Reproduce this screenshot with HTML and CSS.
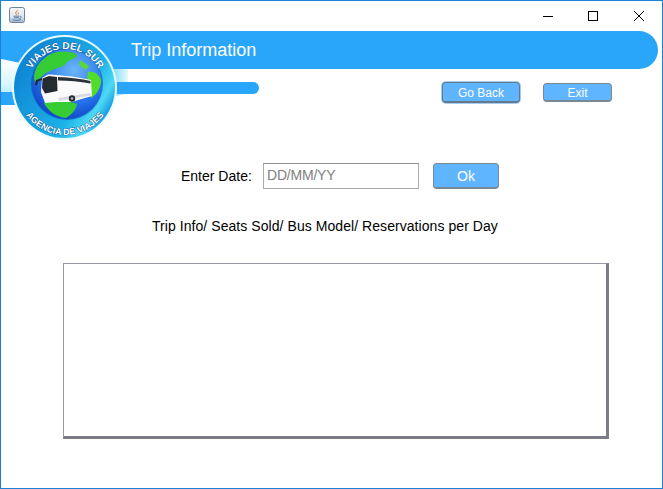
FILE: index.html
```html
<!DOCTYPE html>
<html lang="en">
<head>
  <meta charset="UTF-8">
  <title>Trip Information</title>
  <link rel="stylesheet" href="styles.css">
</head>
<body>

  <div class="window">
    <!-- Title bar -->
    <div class="titlebar">
      <svg class="app-icon" width="16" height="16" viewBox="0 0 16 16">
        <defs>
          <linearGradient id="iconBg" x1="0" y1="0" x2="0" y2="1">
            <stop offset="0" stop-color="#f4f6f8"/>
            <stop offset="0.6" stop-color="#dfe6ee"/>
            <stop offset="1" stop-color="#9fb4cc"/>
          </linearGradient>
        </defs>
        <rect x="0.5" y="0.5" width="15" height="15" rx="2" fill="url(#iconBg)" stroke="#6f8299"/>
        <path d="M8.5 2.5C9.5 4 6.5 5 7.2 6.6C7.5 7.4 8 7.8 8 8.4C6.8 7.6 5.8 6.4 6.6 5.1C7.2 4.2 8.4 3.6 8.5 2.5Z" fill="#e2601c"/>
        <path d="M10 4.6C9 5.3 8.4 5.8 8.8 6.8C9 7.3 9 7.8 8.8 8.2C9.8 7.4 9.6 6.6 9.3 6.1C9.1 5.6 9.4 5.1 10 4.6Z" fill="#e2601c"/>
        <path d="M4.5 9.2H10.5M5 10.7H10M3.5 12.6C6 13.5 10 13.5 12 12.4M11 9.2C12.6 9.2 12.6 11 10.4 11.4" stroke="#4d7397" stroke-width="0.9" fill="none"/>
      </svg>
      <div class="window-controls">
        <svg width="12" height="12" viewBox="0 0 12 12"><path d="M2 6.5H12" stroke="#000"/></svg>
        <svg width="12" height="12" viewBox="0 0 12 12"><rect x="1.5" y="1.5" width="9" height="9" fill="none" stroke="#000"/></svg>
        <svg width="12" height="12" viewBox="0 0 12 12"><path d="M1 1L11 11M11 1L1 11" stroke="#000" fill="none"/></svg>
      </div>
    </div>

    <div class="content">
      <div class="banner">
        <h1 class="banner-title">Trip Information</h1>
      </div>

      <div class="nav-row">
        <div class="sub-bar"></div>
        <div class="nav-buttons">
          <button class="button button-focus">Go Back</button>
          <button class="button button-exit">Exit</button>
        </div>
      </div>

      <div class="date-row">
        <label class="date-label" for="dateInput">Enter Date:</label>
        <input class="date-input" id="dateInput" type="text" placeholder="DD/MM/YY">
        <button class="button button-ok">Ok</button>
      </div>

      <p class="caption">Trip Info/ Seats Sold/ Bus Model/ Reservations per Day</p>

      <textarea class="results"></textarea>

      <!-- Logo sits over the banner, viewBox uses window coordinates -->
      <svg class="logo" width="130" height="115" viewBox="1 31 130 115">
        <defs>
          <linearGradient id="swoosh" x1="0" y1="0" x2="1" y2="0">
            <stop offset="0" stop-color="#6fd8f6"/>
            <stop offset="1" stop-color="#e4f9ff"/>
          </linearGradient>
          <linearGradient id="swooshLeft" x1="0" y1="0" x2="0" y2="1">
            <stop offset="0" stop-color="#ffffff"/>
            <stop offset="0.55" stop-color="#d8f6fe"/>
            <stop offset="1" stop-color="#8fe0f8"/>
          </linearGradient>
          <linearGradient id="ring" x1="0" y1="0" x2="1" y2="0.6">
            <stop offset="0" stop-color="#0b78d4"/>
            <stop offset="0.3" stop-color="#1290d8"/>
            <stop offset="0.75" stop-color="#1cb2e8"/>
            <stop offset="0.92" stop-color="#4ed9f4"/>
            <stop offset="1" stop-color="#1ea6e4"/>
          </linearGradient>
          <radialGradient id="globe" cx="0.6" cy="0.3" r="0.8">
            <stop offset="0" stop-color="#6cb6f8"/>
            <stop offset="0.6" stop-color="#2470ea"/>
            <stop offset="1" stop-color="#0c38bc"/>
          </radialGradient>
          <path id="arcTop" d="M27 87A38 38 0 0 1 103 87"/>
          <path id="arcBottom" d="M17 87A48 48 0 0 0 113 87"/>
        </defs>

        <path d="M1 59C6 60 12 61 20 63V105L1 105Z" fill="url(#swooshLeft)"/>
        <path d="M1 92H20V105H1Z" fill="#29a6fa"/>
        <path d="M110 69H128V94L110 97Z" fill="url(#swoosh)"/>
        <path d="M110 82H128V94H110Z" fill="#29a6fa"/>

        <circle cx="64.5" cy="87.5" r="52.5" fill="#e8fbff"/>
        <circle cx="64.5" cy="87.5" r="50.5" fill="url(#ring)"/>
        <circle cx="67" cy="84" r="36" fill="#0b3fc0" opacity="0.6"/>
        <circle cx="67" cy="84" r="35" fill="url(#globe)"/>

        <!-- continents -->
        <path d="M46 57C54 51 66 50 76 54C78 57 74 59 70 60C66 62 66 66 60 67C54 69 50 71 46 73L35 82C32 74 37 63 46 57Z" fill="#35cc34"/>
        <path d="M88 72C94 71 99 74 101 80C101 88 97 94 91 98C89 90 86 80 88 72Z" fill="#52dc2c"/>
        <path d="M44 103C56 101 70 101 77 104C76 110 72 114 66 118C56 117 48 111 44 103Z" fill="#35cc34"/>
        <path d="M80 60L89 66L86 70L79 65Z" fill="#5ad83a"/>

        <!-- bus -->
        <path d="M42 78L48 74.5C62 75 78 77 91 80L92 96L78 100L72 102H56L45 103L41 92Z" fill="#fafafa"/>
        <path d="M42.5 78.5L49 76L57 77L57.5 91L45 93.5L42 88Z" fill="#242b33"/>
        <path d="M58 77C70 77.5 82 79 90.5 81L90.5 83.5C80 81.5 68 80.5 58 80.5Z" fill="#2a3139"/>
        <path d="M42 78L36 80L35 85L37 85.5L38 81.5L42 80Z" fill="#242b33"/>
        <path d="M58 98L90 93L91 95.5L59 101Z" fill="#d8dce0"/>
        <circle cx="72" cy="98.5" r="3.2" fill="#242b33"/>
        <circle cx="72" cy="98.5" r="1.3" fill="#b0b8c0"/>

        <text class="logo-top"><textPath href="#arcTop" startOffset="50%" text-anchor="middle">VIAJES DEL SUR</textPath></text>
        <text class="logo-bottom"><textPath href="#arcBottom" startOffset="50%" text-anchor="middle">AGENCIA DE VIAJES</textPath></text>
      </svg>
    </div>
  </div>

</body>
</html>
```

FILE: styles.css
```css
body, html {
  margin: 0;
  padding: 0;
  height: 100%;
  font-family: "Liberation Sans", Arial, sans-serif;
  background: #fff;
}

.window {
  box-sizing: border-box;
  width: 663px;
  height: 489px;
  border: 1px solid #1a82d8;
  display: flex;
  flex-direction: column;
  background: #fff;
}

.titlebar {
  height: 30px;
  flex: none;
  display: flex;
  align-items: center;
  justify-content: space-between;
  padding-left: 8px;
}

.app-icon {
  display: block;
  margin-top: -2px;
}

.window-controls {
  display: flex;
  gap: 34px;
  padding-right: 17px;
  margin-top: -1px;
}

.window-controls svg {
  display: block;
}

.content {
  position: relative;
  flex-grow: 1;
  display: flex;
  flex-direction: column;
}

.banner {
  box-sizing: border-box;
  height: 38px;
  margin-right: 4px;
  background: #29a6fa;
  border-radius: 0 19px 19px 0;
  display: flex;
  align-items: center;
  padding: 1px 0 0 130px;
}

.banner-title {
  margin: 0;
  font-size: 18px;
  font-weight: normal;
  color: #fff;
}

.nav-row {
  display: flex;
  justify-content: space-between;
  align-items: flex-start;
  margin-top: 13px;
  padding-right: 50px;
}

.sub-bar {
  width: 142px;
  height: 12px;
  margin-left: 116px;
  background: #29a6fa;
  border-radius: 0 6px 6px 0;
}

.nav-buttons {
  display: flex;
  align-items: center;
  gap: 23px;
}

.button {
  box-sizing: border-box;
  padding: 1px 0 0;
  background: #5fb5ff;
  border: 1px solid #7a8794;
  border-bottom-width: 2px;
  border-radius: 4px;
  color: #fff;
  font-family: inherit;
  font-size: 12px;
}

.button-focus {
  width: 78px;
  height: 21px;
  border-color: #66788c;
  box-shadow: 0 0 0 1px #a4cdf0;
}

.button-exit {
  width: 69px;
  height: 19px;
}

.date-row {
  display: flex;
  align-items: center;
  margin-top: 60px;
  padding-left: 180px;
}

.date-label {
  width: 82px;
  font-size: 14px;
  color: #000;
}

.date-input {
  box-sizing: border-box;
  width: 156px;
  height: 26px;
  padding: 0 3px 3px;
  margin: 0;
  border: 1px solid #ababab;
  border-top-color: #8f8f8f;
  border-radius: 0;
  outline: none;
  font-family: inherit;
  font-size: 14px;
  letter-spacing: -0.2px;
}

.date-input::placeholder {
  color: #808080;
  opacity: 1;
}

.button-ok {
  width: 66px;
  height: 26px;
  margin-left: 14px;
  font-size: 14px;
}

.caption {
  margin: 29px 0 0 151px;
  font-size: 14px;
  line-height: 16px;
  letter-spacing: 0.06px;
  color: #000;
}

.results {
  box-sizing: border-box;
  display: block;
  width: 546px;
  height: 176px;
  margin: 29px 0 0 62px;
  padding: 0;
  border-style: solid;
  border-color: #9a9aa6 #7c7c86 #7c7c86 #9a9aa6;
  border-width: 1px 3px 3px 1px;
  resize: none;
  outline: none;
  background: #fff;
}

.logo {
  position: absolute;
  left: 0;
  top: 0;
  pointer-events: none;
}

.logo-top,
.logo-bottom {
  font-weight: bold;
  fill: #fff;
  stroke: #0a4a88;
  paint-order: stroke;
}

.logo-top {
  font-size: 10px;
  stroke-width: 0.7px;
}

.logo-bottom {
  font-size: 9px;
  stroke-width: 0.7px;
}
```
